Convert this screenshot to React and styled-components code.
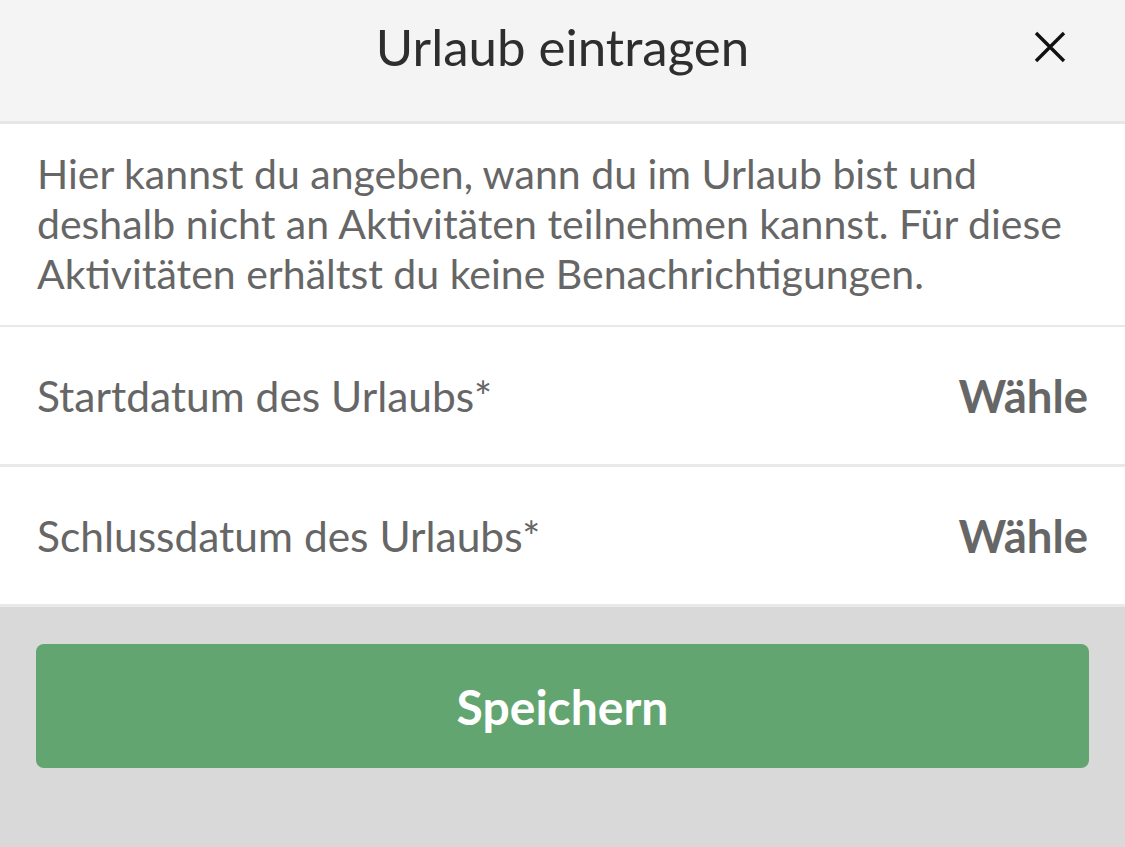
import React from "react";
import styled, { createGlobalStyle } from "styled-components";

const GlobalStyle = createGlobalStyle`
  html, body {
    margin: 0;
    padding: 0;
    background: #d9d9d9;
    font-family: Lato, "Open Sans", sans-serif;
  }
`;

const Screen = styled.div`
  width: 1125px;
  height: 847px;
  display: flex;
  flex-direction: column;
  background: #d9d9d9;
  overflow: hidden;
`;

const Header = styled.header`
  position: relative;
  height: 124px;
  box-sizing: border-box;
  flex-shrink: 0;
  display: flex;
  align-items: center;
  justify-content: center;
  padding-bottom: 28px;
  background: #f4f4f4;
  border-bottom: 3px solid #e6e6e6;
`;

const Title = styled.h1`
  margin: 0;
  font-size: 51px;
  font-weight: 400;
  color: #2e2e2e;
`;

const CloseButton = styled.button`
  position: absolute;
  right: 57px;
  top: 29px;
  width: 36px;
  height: 36px;
  padding: 0;
  border: none;
  background: none;
  display: flex;
  align-items: center;
  justify-content: center;
`;

const Info = styled.p`
  margin: 0;
  background: #fff;
  padding: 25px 37px 26px;
  font-size: 41px;
  line-height: 50px;
  color: #666;
  border-bottom: 2px solid #e9e9e9;
`;

const Row = styled.div`
  height: 140px;
  box-sizing: border-box;
  flex-shrink: 0;
  display: flex;
  align-items: center;
  justify-content: space-between;
  padding: 0 37px;
  background: #fff;
  border-bottom: 3px solid #e9e9e9;
`;

const Label = styled.span`
  font-size: 42.5px;
  color: #666;
`;

const Pick = styled.span`
  font-size: 45.5px;
  font-weight: 700;
  color: #666;
`;

const Footer = styled.div`
  padding: 37px 36px;
`;

const SaveButton = styled.button`
  width: 100%;
  height: 124px;
  border: none;
  border-radius: 8px;
  background: #63a570;
  color: #fff;
  font-family: Lato, sans-serif;
  font-size: 48px;
  font-weight: 700;
`;

const rows = ["Startdatum des Urlaubs*", "Schlussdatum des Urlaubs*"];

const App = () => {
  return (
    <>
      <GlobalStyle />
      <Screen>
        <Header>
          <Title>Urlaub eintragen</Title>
          <CloseButton aria-label="Schließen">
            <svg width="32" height="32" viewBox="0 0 32 32">
              <path d="M2 2 L30 30 M30 2 L2 30" stroke="#111" strokeWidth="3.4" />
            </svg>
          </CloseButton>
        </Header>
        <Info>
          Hier kannst du angeben, wann du im Urlaub bist und deshalb nicht an
          Aktivitäten teilnehmen kannst. Für diese Aktivitäten erhältst du
          keine Benachrichtigungen.
        </Info>
        {rows.map((r) => (
          <Row key={r}>
            <Label>{r}</Label>
            <Pick>Wähle</Pick>
          </Row>
        ))}
        <Footer>
          <SaveButton>Speichern</SaveButton>
        </Footer>
      </Screen>
    </>
  );
};

export default App;
